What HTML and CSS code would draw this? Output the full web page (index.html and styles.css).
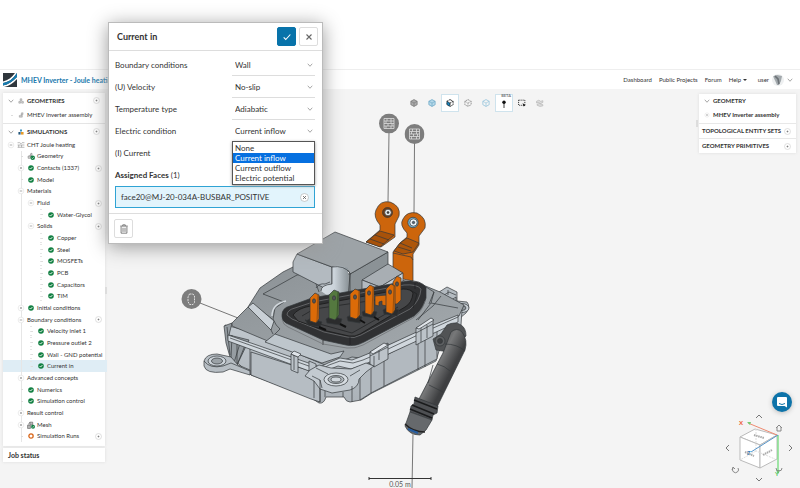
FILE: index.html
```html
<!DOCTYPE html>
<html lang="en">
<head>
<meta charset="utf-8">
<title>MHEV Inverter - Joule heating</title>
<link rel="stylesheet" href="styles.css">
</head>
<body>
<svg class="defs" aria-hidden="true">
  <symbol id="ok" viewBox="0 0 12 12"><circle cx="6" cy="6" r="5.6" fill="#138043"/><path d="M3.2 6.1l2 2 3.6-4" fill="none" stroke="#fff" stroke-width="1.7"/></symbol>
  <symbol id="plus" viewBox="0 0 14 14"><circle cx="7" cy="7" r="6" fill="#fff" stroke="#ccc" stroke-width="1.2"/><path d="M5.2 7h3.600M7 5.2v3.600" stroke="#777" stroke-width="1.5"/></symbol>
  <symbol id="exp" viewBox="0 0 14 14"><circle cx="7" cy="7" r="5" fill="#fff" stroke="#ddd"/><path d="M5.2 7h3.600M7 5.2v3.600" stroke="#888" stroke-width="1.2"/></symbol>
  <symbol id="col" viewBox="0 0 14 14"><circle cx="7" cy="7" r="5" fill="#fff" stroke="#ddd"/><path d="M4.800 7h4.400" stroke="#888" stroke-width="1.2"/></symbol>
  <symbol id="chev" viewBox="0 0 12 12"><path d="M1.500 3.500L6 8.500l4.500-5" fill="none" stroke="#777" stroke-width="1.300"/></symbol>
  <symbol id="geo" viewBox="0 0 14 14"><path d="M5 2h4v4H5zM2 8h4v4H2zM8.500 8h4v4h-4z" fill="#ddd" stroke="#777"/></symbol>
  <symbol id="part" viewBox="0 0 14 14"><path d="M8 2h4l-1 5H7zM3 8h7v4H3z" fill="#ccc" stroke="#888"/></symbol>
  <symbol id="cube" viewBox="0 0 14 14"><path d="M7 1l5.500 3v6L7 13l-5.500-3V4z" fill="var(--f)" stroke="currentColor" stroke-width="1.300" stroke-dasharray="var(--d)"/><path d="M1.500 4L7 7l5.500-3M7 7v6" fill="none" stroke="currentColor" stroke-width="1.100" stroke-dasharray="var(--d)"/></symbol>
  <symbol id="wall" viewBox="0 0 20 20"><circle cx="10" cy="10" r="10" fill="#7d7d7d"/><path d="M5 5h10v10H5zM5 7.500h10M5 10h10M5 12.500h10M8 5v2.500M12 7.500V10M7 7.500V10M9 10v2.500M13 10v2.500M7 12.500V15M12 12.500V15M12 5v2.500" fill="none" stroke="#ddd" stroke-width=".8"/></symbol>
</svg>

<header class="topbar">
  <svg class="logo" viewBox="0 0 14 14"><path d="M0 0h14v14H0z" fill="#30373d"/><path d="M0 8.500C5 7.500 9 4 12 0h2C10 6 6 9 0 10z" fill="#fff"/><path d="M0 12.500C5 11.500 10 8.500 14 4v2c-4 4.500-8 7-13 8H0z" fill="#fff"/><path d="M0 10C6 9 10 6 14 0v4c-4 4.500-9 7.500-14 8.500z" fill="#167bb0"/></svg>
  <h1>MHEV Inverter - Joule heating</h1>
  <nav>
    <a href="#">Dashboard</a><a href="#">Public Projects</a><a href="#">Forum</a><a href="#">Help <span class="caret"></span></a>
    <button class="account" type="button"><span>user</span><svg class="avatar" viewBox="0 0 12 12"><rect width="12" height="12" fill="#eef0f1"/><path d="M1 2l4-1 5 1-1 5-2 4H5z" fill="#a3a9ad"/><path d="M3 2l3 3 1 5" stroke="#6b7176" stroke-width="1.600" fill="none"/></svg><svg class="i6"><use href="#chev"/></svg></button>
  </nav>
</header>

<main class="workspace">
  <svg class="scene" viewBox="0 89 800 399" role="img" aria-label="Inverter assembly">
    <defs>
      <linearGradient id="cyl"><stop offset="0" stop-color="#d5dce2"/><stop offset=".5" stop-color="#cbd3da"/><stop offset="1" stop-color="#8e969b"/></linearGradient>
      <linearGradient id="top" x1="0" y1="0" x2="1" y2="1"><stop offset="0" stop-color="#8c9296"/><stop offset="1" stop-color="#a5abaf"/></linearGradient>
      <linearGradient id="side" x1="0" x2="0" y1="0" y2="1"><stop offset="0" stop-color="#c4cbd1"/><stop offset="1" stop-color="#abb2b8"/></linearGradient>
      <linearGradient id="pipe" gradientUnits="userSpaceOnUse" x1="425" y1="360" x2="450" y2="373"><stop offset="0" stop-color="#4d4e50"/><stop offset=".5" stop-color="#777879"/><stop offset="1" stop-color="#3e3f41"/></linearGradient>
    </defs>
    <g stroke="#777" stroke-width="1"><path d="M389 132l-1 70M414.500 143l-.5 70M200 303l38 15"/></g>
    <g stroke="#33383b" stroke-width=".7" stroke-linejoin="round">
      <!-- rear mounting lugs -->
      <path d="M436 294l11-7 10 5v9l10 1q4 5-1 11l-12 10-20-8z" fill="#b4bbc1"/>
      <path d="M441 297l8-5 7 3M445 304l11-7v10M448 290v5" fill="none"/>
      <ellipse cx="462" cy="308" rx="7" ry="4.500" fill="#c8cfd5"/><ellipse cx="462" cy="308" rx="4" ry="2.400" fill="#8f969b"/>
      <!-- lower casing walls -->
      <path d="M225 325l6 32 20 18 59 22 9 6q5 1 7-6l18 0q2 5 6 5l11-2 11-7 64-32 3-10 22-26 1-15-140 40z" fill="url(#side)"/>
      <path d="M251 352l69 22v28l-9-3-60-24z" fill="#b6bdc3"/>
      <path d="M360 368l77-38v29l-66 34-11 7z" fill="#b2b9bf"/>
      <path d="M371 363v30M384 357v29M418 340v30M425 336v31" fill="none"/>
      <path d="M224 326l8-3-3 12 20 5-12 25-7-8-4-14z" fill="#969da2"/>
      <path d="M227 327l3 28M232 335l-1 23M237 338v25M241 340l-8 26M246 343l-9 22M250 345v30" fill="none"/>
      <!-- left lug -->
      <path d="M204 361q2-7 13-7l14 3 7 8 12 5v5l-20-6-7 3q-17 2-19-6z" fill="#b7bec4"/>
      <path d="M204 361q6 8 19 5l8-3 19 8" fill="none"/>
      <ellipse cx="217" cy="361" rx="9" ry="5" fill="#ccd3d9"/><ellipse cx="217" cy="361" rx="5.500" ry="3" fill="#9ba2a7"/>
      <!-- cover plate -->
      <path d="M232 323l16-16 12-19 23-16 10-5 114 14 16 4 17 7 24 13-5 11-39 16-38 16-22 10-8-1-10 4-14 5-8-3-88-37z" fill="url(#top)"/>
      <path d="M228 335l92 32 8-4 12-5 12 2 8-3 22-9 39-18 37-15v7l-37 17-39 18-22 9-9 3-13-3-10 4-8 5-92-34z" fill="#d0d7dd"/>
      <path d="M230 338l90 32 9-5 11-4 13 2 10-3 21-9 38-18 36-16" fill="none"/>
      <path d="M265 342l10-8 56 20 13-3-4 6-18 6z" fill="#bec6cc"/>
      <path d="M263 294l34-19q14-3 18 6l4 11M263 294l21 8-9 6-2 11q3 7 7 10l-5 5M248 307l20 17 5 10M252 303l20 16" fill="none"/>
      <path d="M248 307l5-4 21 18-3 9z" fill="#c9d0d6"/>
      <path d="M272 316q0-12 14-15" fill="none" stroke="#d3d9de" stroke-width="1.500"/>
      <path d="M426 287l8 5-3 11-13 17M434 292l-5 12M441 296l-8 10-17 14M431 303l27 5" fill="none"/>
      <!-- front clamps -->
      <path d="M291 354l7 3v16l-7-3zM309 361l7 3v17l-7-3zM370 352l18-9v16l-14 8-4-3zM416 328l17-9v17l-17 9z" fill="#bcc3c9"/>
      <path d="M294 353v17M370 356l18-9M374 356v11M379 350v10M416 333l17-9M421 328v14M427 325v13" fill="none"/>
      <path d="M291 354l3-3 7 3-3 3zM370 352l14-9 4 2-15 9zM416 328l15-10 3 2-15 9z" fill="#dfe4e9"/>
      <!-- front lug -->
      <path d="M310 370l9-5 12 3 20 1 15-6 8 3-8 6-7 7q0 8-9 11l-18 3-12-4-6-8-9-5z" fill="#c3cad0"/>
      <path d="M312 376l8 4 2 8M360 370l-10 6M316 368l12 6M314 381v17M325 391v6M343 392v5M352 386v16M320 380v22" fill="none"/>
      <ellipse cx="336" cy="379.500" rx="12" ry="6.500" fill="#d6dce1"/><ellipse cx="336" cy="379.500" rx="8" ry="4" fill="#aeb5ba"/><ellipse cx="336" cy="379.500" rx="5" ry="2.500" fill="#d1d7dc"/>
      <!-- copper busbars -->
      <g fill="#cc650c">
        <path d="M380 225q-7-8-4-15 4-10 14-8 11 4 9 14l-4 8v13l-14 10-15-5 14-12z"/>
        <path d="M366 242l14-11 14 4-14 12z" fill="#a8520a"/><path d="M370 239l14 5M375 235l14 5" fill="none"/>
        <circle cx="387.500" cy="212.500" r="5" fill="#6e3b13"/><circle cx="388" cy="212.500" r="3.300" fill="#e8eef1"/><circle cx="388" cy="212.500" r="1" fill="#333"/>
        <path d="M407 233q-8-8-4-14 4-8 14-6 10 5 8 15l-6 8v9l-6 9v27l-20-4v-25l7-9 7-6z"/>
        <path d="M394 251l6-8 7-5 12 5-6 9-10 2z" fill="#ad560b"/><path d="M400 243l12 5M393 253l18 4 2 3M398 247l13 4" fill="none"/>
        <circle cx="413" cy="222.500" r="5.200" fill="#78b9d7"/><circle cx="413.500" cy="222.500" r="3.700" fill="#eaf4f8"/><circle cx="413.500" cy="222.500" r="1.200" fill="#567"/>
      </g>
      <!-- raised block -->
      <path d="M297 254l35 13v25l-39-20v-10z" fill="#b3bac0"/>
      <path d="M350 274l38-22v20l-27 23-13 3z" fill="#8b9296"/>
      <path d="M297 254l38-22 53 20-38 22q-2-7-9-7h-9z" fill="#9da3a7"/>
      <path d="M362 280l26-16 15 9-23 14z" fill="#a8aeb3"/><path d="M362 280l18 7v12l-18-6z" fill="#b3bac0"/><path d="M380 287l23-14v8l-18 12-5 3z" fill="#c8cfd5"/>
      <path d="M321 291q1-7 11-7v-17q8-3 16 1v26q-12 9-27-3z" fill="url(#cyl)" stroke="none"/>
      <path d="M332 267v17q-11 1-11 7M332 267q12-2 18 6v24M316 288q3-5 9-4l5-2" fill="none"/>
      <!-- connector tray -->
      <path d="M282 315q0-7 8-9l22-8 96-17q12-1 18 6v11q-3 11-12 18l-50 26q-9 5-18 3l-23-5-37-17q-5-3-4-8z" fill="#303133"/>
      <path d="M287 315q0-5 8-7l18-6 91-17q13-1 17 4-1 12-11 20l-49 26q-7 4-14 2l-23-5-32-13z" fill="none" stroke="#77797b"/>
      <path d="M293 315q5-7 18-9l92-17q8 0 10 4-1 10-8 14l-45 27q-5 3-11 2l-22-5-29-10z" fill="#464749" stroke="#151616"/>
      <path d="M302 316l12-7 82-12M305 320l47 13 46-26M323 340v5M350 337v8M410 290l7 4-4 14M415 283v6" fill="none" stroke="#202122"/>
      <path d="M282 319q1 6 6 8l35 17 24 4q8 1 16-3l50-27q9-6 12-17" fill="none" stroke="#6a6d70"/>
      <g fill="#2b2c2d"><path d="M306 321l5-3 11 4-2 5-12-2zM326 319l5-3 11 3-2 6-13-2zM347 317l6-3 9 3-2 6-12-2zM362 312l6-3 9 3-2 6-12-2zM383 310l5-3 11 3-2 6-13-2z"/></g>
      <path d="M319 327l7 3M340 324l6 3M360 320l5 3M374 317l5 3" stroke="#111" stroke-width="2"/>
      <path d="M375 296l12-1v11l-5-1v-4l-3 1v4l-4-1z" fill="#d96b08"/>
      <g fill="#db6b08"><path d="M393 304v-22l4-6 4 2v22l-4 4z"/><path d="M310 321v-23l5-5 4 2v24l-3 4z"/><path d="M350 317v-23l5-5 5 2v24l-4 4z"/><path d="M365 313v-23l5-5 4 2v24l-3 4z"/><path d="M386 312v-23l5-5 4 2v24l-3 4z"/></g>
      <path d="M329 318v-23l5-5 5 2v23l-4 5z" fill="#54783f"/>
      <path d="M317 322l1-27M358 318l1-27M372 314l1-27M393 313l1-27" fill="none" stroke="#7b430f"/><path d="M337 318l1-26" stroke="#2f4822"/>
      <g fill="#555"><ellipse cx="314" cy="301" rx="1.500" ry="2.200"/><ellipse cx="334" cy="298" rx="1.500" ry="2.200"/><ellipse cx="355" cy="297" rx="1.500" ry="2.200"/><ellipse cx="369" cy="293" rx="1.500" ry="2.200"/><ellipse cx="390" cy="292" rx="1.500" ry="2.200"/><ellipse cx="397" cy="284" rx="1.500" ry="2.200"/></g>
      <!-- coolant pipe -->
      <path d="M433 339l8-5 6-9q8-4 14 0 5 3 5 11l-17 16-13-2z" fill="#515355"/>
      <circle cx="440" cy="341" r="5" fill="#5e6062"/><circle cx="440" cy="341" r="2.500" fill="#3c3e40"/>
      <path d="M451 332q6-5 11 0 6 8 3 18l-28 57-18-8 24-46z" fill="url(#pipe)"/>
      <path d="M445 344q12 0 20 7M437 364q8 2 13 7M429 385l14 7M433 365l-5 18" fill="none"/>
      <path d="M415 397l23 9-1 7-4 2-1 5-22-8 1-6 3-2z" fill="#4e5053"/>
      <path d="M414 400l23 9M412 405l22 9M410 409l22 9" fill="none" stroke="#1a1b1c" stroke-width="1.400"/>
      <path d="M410 412l22 8-6 10-6 5q-11 0-15-9z" fill="#66696c"/>
      <path d="M405 424q8 8 20 8" fill="none" stroke="#222" stroke-width="1.500"/><path d="M408 429l10 4" stroke="#245b9e" stroke-width="2"/>
    </g>
    <path d="M413 433l-1 55" stroke="#777"/>
    <path d="M369 478.500h62M369 477v3M431 477v3" stroke="#333"/>
    <use href="#wall" x="379" y="113.500" width="20" height="20"/><use href="#wall" x="404.500" y="124" width="20" height="20"/>
    <circle cx="191.500" cy="299" r="10" fill="#7d7d7d"/><path d="M189.500 294h3.500l1.500 2v6.500l-1.500 2h-3.500l-1.500-3v-4.500z" fill="none" stroke="#ddd" stroke-dasharray="2 .8"/>
    <text class="scale" x="400" y="487" text-anchor="middle">0.05 m</text>
  </svg>

  <aside class="sidebar">
    <section class="tree">
      <div class="head"><svg><use href="#chev"/></svg><svg><use href="#geo"/></svg><b>GEOMETRIES</b><button type="button" aria-label="Add geometry"><svg><use href="#plus"/></svg></button></div>
      <div class="head sub"><i></i><svg><use href="#part"/></svg><span class="t">MHEV Inverter assembly</span></div>
      <div class="head sims"><svg><use href="#chev"/></svg><svg viewBox="0 0 14 14"><path d="M5 1h4v5H5z" fill="#1a80b6"/><path d="M1 7h5v6H1z" fill="#24567b"/><path d="M7 7h6v6H7z" fill="#e79a25"/></svg><b>SIMULATIONS</b><button type="button" aria-label="Add simulation"><svg><use href="#plus"/></svg></button></div>
      <ul class="rows">
        <li class="l0"><svg><use href="#col"/></svg><svg viewBox="0 0 14 14"><path d="M1 3h4l2 2 2-2h4M1 7h12M1 11h12M3 7v4M8 7v4" stroke="#888" fill="none"/></svg><span>CHT Joule heating</span></li>
        <li class="l1"><i></i><svg viewBox="0 0 14 14"><path d="M2 7h4v4H2zM7 2l2 1-1 4H5z" fill="#ddd" stroke="#777"/><circle cx="10" cy="10" r="4" fill="#138043"/><path d="M8 10l1.500 1.500L12 9" stroke="#fff" fill="none"/></svg><span>Geometry</span></li>
        <li class="l1"><svg><use href="#exp"/></svg><svg class="st"><use href="#ok"/></svg><span>Contacts (1337)</span><button type="button" aria-label="Contact options"><svg><use href="#plus"/></svg></button></li>
        <li class="l1"><i></i><svg class="st"><use href="#ok"/></svg><span>Model</span></li>
        <li class="l1"><svg><use href="#col"/></svg><span>Materials</span></li>
        <li class="l2"><svg><use href="#col"/></svg><span>Fluid</span><button type="button" aria-label="Add fluid"><svg><use href="#plus"/></svg></button></li>
        <li class="l3"><i></i><svg class="st"><use href="#ok"/></svg><span>Water-Glycol</span></li>
        <li class="l2"><svg><use href="#col"/></svg><span>Solids</span><button type="button" aria-label="Add solid"><svg><use href="#plus"/></svg></button></li>
        <li class="l3"><i></i><svg class="st"><use href="#ok"/></svg><span>Copper</span></li>
        <li class="l3"><i></i><svg class="st"><use href="#ok"/></svg><span>Steel</span></li>
        <li class="l3"><i></i><svg class="st"><use href="#ok"/></svg><span>MOSFETs</span></li>
        <li class="l3"><i></i><svg class="st"><use href="#ok"/></svg><span>PCB</span></li>
        <li class="l3"><i></i><svg class="st"><use href="#ok"/></svg><span>Capacitors</span></li>
        <li class="l3"><i></i><svg class="st"><use href="#ok"/></svg><span>TIM</span></li>
        <li class="l1"><svg><use href="#exp"/></svg><svg class="st"><use href="#ok"/></svg><span>Initial conditions</span></li>
        <li class="l1"><svg><use href="#col"/></svg><span>Boundary conditions</span><button type="button" aria-label="Add boundary condition"><svg><use href="#plus"/></svg></button></li>
        <li class="l2"><i></i><svg class="st"><use href="#ok"/></svg><span>Velocity inlet 1</span></li>
        <li class="l2"><i></i><svg class="st"><use href="#ok"/></svg><span>Pressure outlet 2</span></li>
        <li class="l2"><i></i><svg class="st"><use href="#ok"/></svg><span>Wall - GND potential</span></li>
        <li class="l2 current"><i></i><svg class="st"><use href="#ok"/></svg><span>Current in</span></li>
        <li class="l1"><svg><use href="#exp"/></svg><span>Advanced concepts</span></li>
        <li class="l1"><i></i><svg class="st"><use href="#ok"/></svg><span>Numerics</span></li>
        <li class="l1"><i></i><svg class="st"><use href="#ok"/></svg><span>Simulation control</span></li>
        <li class="l1"><svg><use href="#exp"/></svg><span>Result control</span></li>
        <li class="l1"><svg><use href="#exp"/></svg><svg viewBox="0 0 14 14"><path d="M1 8h5v5H1zM5 2h5v5H5zM1 8l4-6" fill="#bbb" stroke="#555"/><circle cx="10.500" cy="10" r="3.500" fill="#138043"/><path d="M9 10l1.200 1.200L12 9" stroke="#fff" fill="none"/></svg><span>Mesh</span></li>
        <li class="l1"><i></i><svg class="st" viewBox="0 0 12 12"><circle cx="6" cy="6" r="4.300" fill="#fff" stroke="#d9661a" stroke-width="2.600"/></svg><span>Simulation Runs</span><button type="button" aria-label="Add run"><svg><use href="#plus"/></svg></button></li>
      </ul>
    </section>
    <section class="jobs">Job status</section>
  </aside>

  <span class="grip left"></span>

  <div class="toolbar" role="toolbar" aria-label="View tools">
    <button type="button" class="grey" aria-label="Shaded"><svg><use href="#cube"/></svg></button>
    <button type="button" class="blue" aria-label="Edges"><svg><use href="#cube"/></svg></button>
    <button type="button" class="on" aria-label="Faces"><svg viewBox="0 0 14 14"><path d="M1.500 4L7 7v6l-5.500-3z" fill="#1684bf"/><path d="M7 1l5.500 3v6L7 13l-5.500-3V4zM1.500 4L7 7l5.500-3M7 7v6" fill="none" stroke="#222" stroke-width="1.400" stroke-dasharray="4 1"/></svg></button>
    <button type="button" class="dash" aria-label="Vertices"><svg><use href="#cube"/></svg></button>
    <button type="button" class="line" aria-label="Volumes"><svg><use href="#cube"/></svg></button>
    <button type="button" class="on beta" aria-label="Probe"><small>BETA</small><svg viewBox="0 0 14 14"><circle cx="7" cy="4" r="3" fill="#111"/><path d="M7 5v9" stroke="#111" stroke-width="1.400"/></svg></button>
    <button type="button" aria-label="Box select"><svg viewBox="0 0 14 14"><path d="M1 2h11v9H1z" fill="none" stroke="#222" stroke-width="1.500" stroke-dasharray="2 1.500"/><path d="M8 7l5 4-3 2z" fill="#111"/></svg></button>
    <button type="button" class="pale" aria-label="Measure"><svg viewBox="0 0 14 14"><path d="M1 4l4-2 3 2 4-1v3L8 8 4 6 1 7zM2 9l4-1 6 2v2l-5 1-5-2z" fill="#ddd" stroke="#aaa"/></svg></button>
  </div>

  <span class="grip right"></span>

  <aside class="scenepanel">
    <div><svg><use href="#chev"/></svg><b>GEOMETRY</b></div>
    <div><svg><use href="#exp"/></svg><b>MHEV Inverter assembly</b></div>
    <div class="sec"><b>TOPOLOGICAL ENTITY SETS</b><button type="button" aria-label="Add entity set"><svg><use href="#plus"/></svg></button></div>
    <div class="sec"><b>GEOMETRY PRIMITIVES</b><button type="button" aria-label="Add primitive"><svg><use href="#plus"/></svg></button></div>
  </aside>

  <button class="chat" type="button" aria-label="Open chat"><svg viewBox="0 0 20 20"><path d="M6 5h8q1 0 1 1v9.500L12.500 14H6q-1 0-1-1V6q0-1 1-1z" fill="#fff"/><path d="M7 11.500q3 2 6 0" stroke="#0d73a9" fill="none"/></svg></button>
  <svg class="viewcube" viewBox="0 0 72 70" role="img" aria-label="Orientation cube">
    <path d="M16 24l15-8 22 6-17 10z" fill="#fff" stroke="#bbb"/><path d="M16 24l20 8v23l-20-8z" fill="#fff" stroke="#bbb"/><path d="M36 32l17-10v24L36 55z" fill="#fff" stroke="#bbb"/>
    <path d="M32 16v22l19 8M32 38l-16 9" stroke="#ddd" fill="none" stroke-dasharray="2 1"/>
    <path d="M24 10l29 12" stroke="#ee8a70" stroke-width="1"/><path d="M54 22v38" stroke="#72dd7c" stroke-width="1.300"/><path d="M54 22L27 39" stroke="#5795c9" stroke-width="1"/>
    <path d="M23 9l4 0-1 3zM52 57l2 4 2-4z" fill="#72cc73"/>
    <text x="15" y="12" fill="#ee5a33">X</text><text x="23" y="42" fill="#2878b8">Z</text><text x="51" y="63" fill="#4fc65c">Y</text>
    <path d="M30 22l10 3M39 42l9-5M21 39l9 4" stroke="#aaa" stroke-width="2" stroke-dasharray="1.500 .7"/>
    <path d="M32 5l3-3 3 3M32 65l3 3 3-3M5 32l-3 3 3 3M65 32l3 3-3 3" fill="none" stroke="#777"/>
    <path d="M52 15l3-3 3 3M53 14v4h4v-4M9 55a3 3 0 1 0 5 0M8 57l1-3 2 2M58 55a3 3 0 1 1-6 0" fill="none" stroke="#888"/>
  </svg>
</main>

<form class="dialog">
  <header><h2>Current in</h2><button class="save" type="button" aria-label="Save"><svg viewBox="0 0 12 12"><path d="M2 6.500l2.500 2.500L10 3" fill="none" stroke="#fff" stroke-width="1.300"/></svg></button><button type="button" aria-label="Close"><svg viewBox="0 0 12 12"><path d="M3 3l6 6M9 3L3 9" stroke="#666" stroke-width="1.300"/></svg></button></header>
  <div class="fields">
    <div class="field"><label for="bc">Boundary conditions</label><div class="pick"><select id="bc"><option>Wall</option></select><svg><use href="#chev"/></svg></div></div>
    <div class="field"><label for="vel">(U) Velocity</label><div class="pick"><select id="vel"><option>No-slip</option></select><svg><use href="#chev"/></svg></div></div>
    <div class="field"><label for="temp">Temperature type</label><div class="pick"><select id="temp"><option>Adiabatic</option></select><svg><use href="#chev"/></svg></div></div>
    <div class="field"><label for="el">Electric condition</label><div class="pick"><select id="el"><option>Current inflow</option></select><svg><use href="#chev"/></svg>
      <ul class="menu" role="listbox" aria-label="Electric condition"><li role="option">None</li><li role="option" aria-selected="true">Current inflow</li><li role="option">Current outflow</li><li role="option">Electric potential</li></ul></div></div>
    <div class="field"><span>(I) Current</span></div>
    <div class="field"><span><b>Assigned Faces</b> (1)</span></div>
    <div class="face"><span>face20@MJ-20-034A-BUSBAR_POSITIVE</span><button type="button" aria-label="Remove face"><svg viewBox="0 0 12 12"><circle cx="6" cy="6" r="5.300" fill="#fff" stroke="#aaa" stroke-width=".8"/><path d="M4 4l4 4M8 4L4 8" stroke="#555"/></svg></button></div>
  </div>
  <footer><button type="button" aria-label="Delete"><svg viewBox="0 0 12 12"><path d="M1.500 2.500h9M4.500 2.500V1h3v1.500M2.500 3v8h7V3M4.800 4.500v5M7.200 4.500v5" fill="none" stroke="#666"/></svg></button></footer>
</form>
</body>
</html>
```
FILE: styles.css
```css
* { box-sizing: border-box; }
body { margin: 0; min-height: 100vh; padding-top: 69px; display: flex; flex-direction: column; position: relative; background: #fff; color: #333; font: 6px/8px Lato, "Liberation Sans", sans-serif; }
h1, h2, ul { margin: 0; padding: 0; list-style: none; }
button { padding: 0; border: 0; background: none; font: inherit; color: inherit; display: flex; align-items: center; justify-content: center; }
svg { flex: none; display: block; }
.defs { position: absolute; width: 0; height: 0; }

.topbar { height: 20px; display: flex; align-items: center; gap: 4px; padding: 0 7px 0 3px; border-top: 1px solid #eee; background: #fff; }
.logo { width: 14px; height: 14px; }
h1 { font-size: 7px; line-height: 8px; color: #1878ad; }
nav { margin-left: auto; display: flex; align-items: center; gap: 7px; }
nav a { color: #333; text-decoration: none; }
.caret { display: inline-block; border: 2px solid transparent; border-top-color: #333; border-bottom: 0; vertical-align: middle; }
.account { gap: 3px; margin-left: 4px; }
.avatar { width: 12px; height: 12px; border-radius: 6px; }
.i6 { width: 6px; height: 6px; }

.workspace { flex: 1; position: relative; display: flex; align-items: stretch; padding: 4px 4px 0 3px; background: #f4f4f4; }
.scene { position: absolute; inset: 0; width: 100%; height: 100%; }
.scale { font-size: 7px; fill: #555; }

.sidebar { position: relative; width: 102px; display: flex; flex-direction: column; gap: 2px; margin-bottom: 26px; }
.tree, .jobs, .scenepanel { background: #fff; box-shadow: 0 0 3px #ddd; }
.tree { flex: 1; display: flex; flex-direction: column; padding-bottom: 4px; }
.jobs { height: 14px; padding: 0 5px; font-weight: bold; font-size: 7px; line-height: 14px; }
.head { height: 15px; display: flex; align-items: center; padding: 0 5px 0 3px; }
.head > svg { width: 8px; height: 6px; margin: 0 1px; }
.head > i { width: 2px; height: 1px; margin: 0 3px 0 5px; background: #ddd; }
.head b, .head .t { margin-left: 1px; }
.head.sub { height: 14px; }
.head.sims { border-top: 1px solid #e5e5e5; height: 16px; margin-top: 1px; }
.head button, .rows button { margin-left: auto; }
.head button svg, .rows button svg, .scenepanel button svg { width: 7px; height: 7px; }
.rows { flex: 1; display: grid; grid-auto-rows: 1fr; }
.rows li { display: flex; align-items: center; padding-right: 5px; white-space: nowrap; background: no-repeat 18px 0 / 1px 100% linear-gradient(#e6e6e6, #e6e6e6); }
.rows li > svg, .rows li > i { width: 8px; height: 8px; margin: 0 1px; }
.rows li > i { height: 1px; width: 2px; margin: 0 3px 0 5px; background: #ddd; }
.rows li > .st { width: 6px; height: 6px; margin: 0 2px; }
.rows li > span { margin-left: 1px; }
.rows li.l0 { padding-left: 3px; background: none; }
.rows .l1 { padding-left: 13px; }
.rows .l2 { padding-left: 23px; }
.rows .l3 { padding-left: 33px; }
.rows .l2 > i, .rows .l3 > i { box-shadow: -1px -5px #e6e6e6, -1px 0 #e6e6e6, -1px 4px #e6e6e6; }
.rows .current { background-color: #dfedf5; }

.grip { position: relative; align-self: center; width: 2px; height: 7px; background: #ddd; }
.grip.right { align-self: flex-start; margin: 27px 1px 0 auto; }

.toolbar { position: relative; align-self: flex-start; display: flex; gap: 2px; margin: 2px 0 0 299px; }
.toolbar button { width: 16px; height: 16px; position: relative; color: #777; --f: none; --d: none; }
.toolbar svg { width: 8px; height: 8px; }
.toolbar .on { background: #fff; outline: 1px solid #cfe3ed; }
.toolbar .grey { --f: #aaa; }
.toolbar .blue { --f: #b5d8e9; color: #6aa7c6; }
.toolbar .dash { --d: 2 1; }
.toolbar .line { color: #8fc1da; }
.toolbar .beta { padding-top: 2px; }
.toolbar small { position: absolute; top: -1px; right: 1px; font-size: 4px; line-height: 4px; font-weight: bold; }

.scenepanel { position: relative; align-self: flex-start; width: 97px; margin-top: 1px; }
.scenepanel div { height: 14px; display: flex; align-items: center; padding: 0 5px; gap: 3px; white-space: nowrap; }
.scenepanel div > svg { width: 6px; height: 6px; }
.scenepanel .sec { height: 15px; padding-left: 3px; border-top: 1px solid #e8e8e8; }
.scenepanel div:nth-child(2) { margin-bottom: 1px; }
.scenepanel button { margin-left: auto; }

.chat { position: absolute; right: 8px; bottom: 76px; width: 20px; height: 20px; border-radius: 10px; background: #0d73a9; box-shadow: 0 1px 5px #bbb; }
.chat svg { width: 20px; height: 20px; }
.viewcube { position: absolute; right: 4px; bottom: 5px; width: 72px; height: 70px; font-size: 6px; font-weight: bold; }

.dialog { position: absolute; left: 108px; top: 22px; width: 215px; background: #fff; border: 1px solid #bbb; box-shadow: 0 3px 18px #999; font-size: 8px; line-height: 10px; color: #333; }
.dialog header { height: 28px; display: flex; align-items: center; gap: 3px; padding: 0 4px 0 8px; border-bottom: 1px solid #ddd; }
h2 { font-size: 9px; line-height: 12px; margin-right: auto; }
.dialog header button, footer button { width: 19px; height: 19px; border: 1px solid #ddd; border-radius: 2px; }
.dialog header .save { background: #0873aa; border-color: #0873aa; }
.dialog header svg, footer svg { width: 10px; height: 10px; }
.fields { padding: 3px 7px 5px 6px; }
.field { height: 22px; display: grid; grid-template-columns: 1fr 83px; align-items: center; }
.pick { position: relative; height: 22px; border-bottom: 1px solid #ddd; }
.pick select { appearance: none; width: 100%; height: 21px; border: 0; background: none; padding: 0 3px; font: inherit; color: inherit; }
.pick > svg { position: absolute; right: 2px; top: 8px; width: 6px; height: 6px; pointer-events: none; }
.menu { position: absolute; z-index: 1; top: 100%; left: 0; right: 0; padding: 1px 0; background: #fff; border: 1px solid #555; box-shadow: 0 1px 3px #999; }
.menu li { padding: 0 2px; height: 10px; white-space: nowrap; }
.menu [aria-selected] { background: #0670e0; color: #fff; }
.face { height: 22px; display: flex; align-items: center; justify-content: space-between; padding: 0 5px; background: #e2f4fc; border: 1px solid #2fa3d4; }
.face svg { width: 9px; height: 9px; }
footer { height: 30px; border-top: 1px solid #ddd; display: flex; align-items: center; padding: 0 5px; }
```
